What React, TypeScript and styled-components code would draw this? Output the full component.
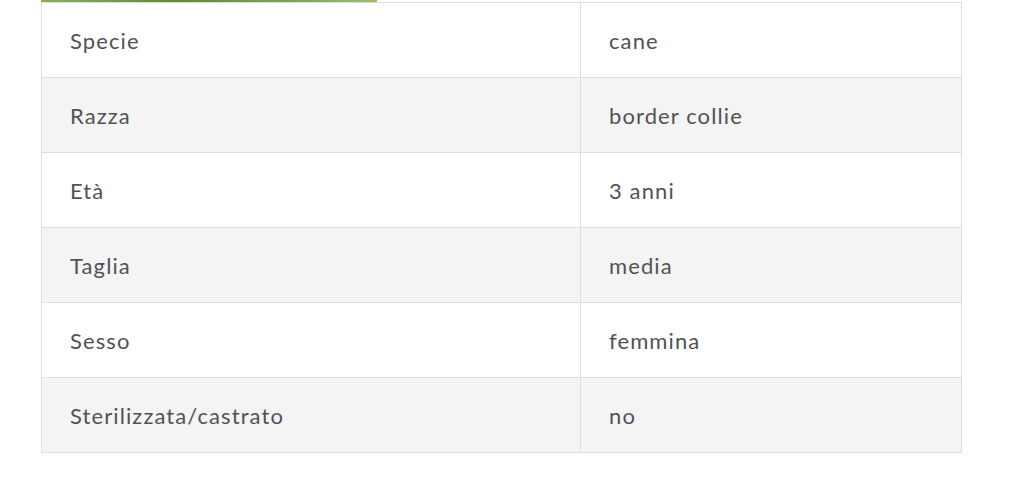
import React from 'react';
import styled, {createGlobalStyle} from "styled-components";

const GlobalStyle = createGlobalStyle`
  body {
    margin: 0;
    background: #ffffff;
    font-family: Lato, "Open Sans", sans-serif;
  }
`

const rows = [
    {label: "Specie", value: "cane"},
    {label: "Razza", value: "border collie"},
    {label: "Età", value: "3 anni"},
    {label: "Taglia", value: "media"},
    {label: "Sesso", value: "femmina"},
    {label: "Sterilizzata/castrato", value: "no"},
];

export default function App() {
    return (
        <StyledPage>
            <GlobalStyle/>
            <PhotoEdge/>
            <InfoTable>
                <colgroup>
                    <col style={{width: 539}}/>
                    <col/>
                </colgroup>
                <tbody>
                {rows.map((row, i) => (
                    <Row key={row.label} striped={i % 2 === 1}>
                        <Cell>{row.label}</Cell>
                        <Cell>{row.value}</Cell>
                    </Row>
                ))}
                </tbody>
            </InfoTable>
        </StyledPage>
    );
};

const StyledPage = styled.div`
  padding: 0 62px 0 41px;
  width: 1024px;
  box-sizing: border-box;
`

const PhotoEdge = styled.div`
  width: 336px;
  height: 2px;
  background: linear-gradient(90deg, #8fb052 0%, #5f8a34 40%, #7ea145 70%, #9dbd62 100%);
`

const InfoTable = styled.table`
  width: 921px;
  border-collapse: collapse;
  table-layout: fixed;
  border: 1px solid #dfdfdf;
`

const Row = styled.tr<{ striped: boolean }>`
  height: 75px;
  background: ${p => p.striped ? "#f4f4f4" : "#ffffff"};
`

const Cell = styled.td`
  border: 1px solid #dfdfdf;
  padding: 0 28px;
  font-size: 22px;
  letter-spacing: 1.1px;
  color: #525254;
  vertical-align: middle;
`
